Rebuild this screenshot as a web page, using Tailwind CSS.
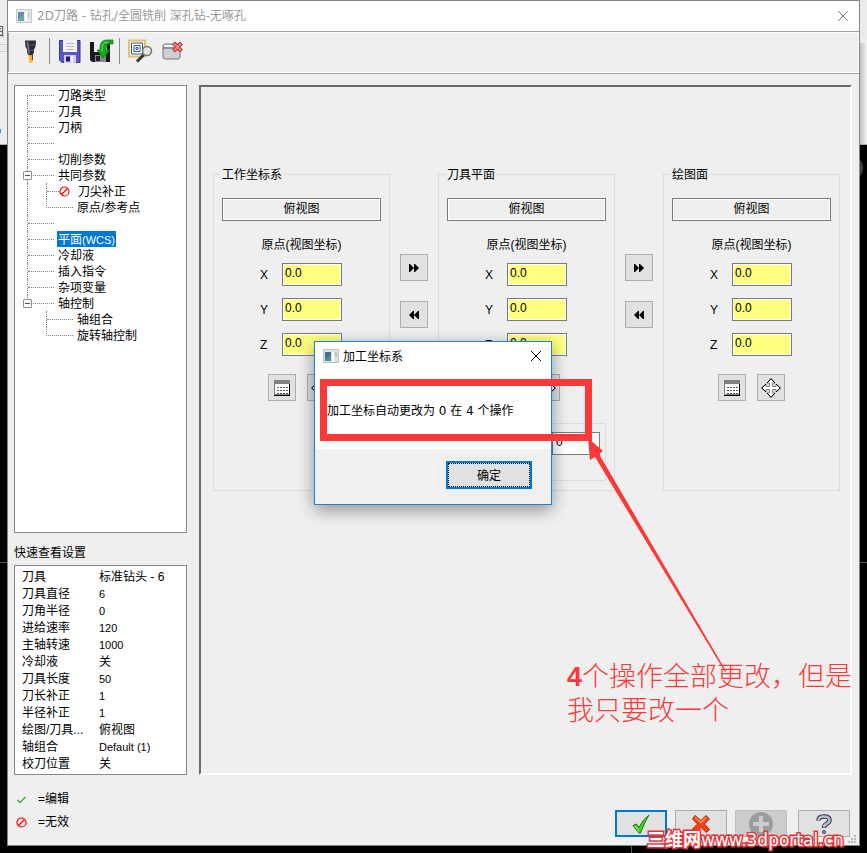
<!DOCTYPE html>
<html lang="zh-CN">
<head>
    <meta charset="UTF-8">
    <meta name="viewport" content="width=device-width, initial-scale=1.0">
    <title>2D刀路</title>
    <script src="https://cdn.jsdelivr.net/npm/@tailwindcss/browser@4"></script>
</head>
<body class="relative flex h-screen flex-col overflow-hidden bg-black px-[7px] pb-[7px] font-['Liberation_Sans','Noto_Sans_CJK_SC',sans-serif] text-[12px] leading-4 text-black">

    <!-- Shared icons -->
    <svg class="hidden">
        <symbol id="app" viewBox="0 0 16 14">
            <path d="M.5.5h15v13H.5z" fill="#dfe3e6" stroke="#b9bec2"/>
            <path d="M2 3h6v9H2z" fill="#4d8f8a"/><path d="M2 3h6v3L2 10z" fill="#43719c"/>
            <path d="M9 3h2v9H9z" fill="#fff"/><path d="M12 3h2v5h-2z" fill="#a9cdb8"/>
        </symbol>
        <symbol id="no" viewBox="0 0 11 11">
            <circle cx="5.5" cy="5.5" r="4.5" fill="none" stroke="#f00" stroke-width="1.2"/><path d="M2.5 8.5l6-6" stroke="#f00" stroke-width="1.2"/>
        </symbol>
        <symbol id="list" viewBox="0 0 16 16">
            <path d="M.5.5h15v14H.5z" fill="#fff" stroke="#808080"/><path d="M0 0h16v4H0z" fill="#808080"/>
            <path d="M0 15.5h16M15.5 4v12" stroke="#000"/>
            <path d="M3 7.5h11M3 10.5h11M3 13.5h11" stroke="#555" stroke-dasharray="2 1"/>
        </symbol>
        <symbol id="move" viewBox="0 0 20 20">
            <path d="M10 .7l4 4.300h-2.500v3.500H15V6l4.300 4-4.300 4v-2.500h-3.500V15H14l-4 4.300L6 15h2.500v-3.500H5V14L.7 10 5 6v2.500h3.500V5H6z" fill="#fff" stroke="#808080"/>
            <path d="M6 5l4-4.300L14 5M15 6l4.300 4-4.300 4M14 15l-4 4.300L6 15M5 14L.7 10 5 6" fill="none" stroke="#000"/>
        </symbol>
        <symbol id="next" viewBox="0 0 10 8"><path d="M0 0h1l4 4-4 4H0zM5 0h1l4 4-4 4H5z"/></symbol>
        <symbol id="prev" viewBox="0 0 10 8"><path d="M5 0H4L0 4l4 4h1zM10 0H9L5 4l4 4h1z"/></symbol>
    </svg>

    <!-- Desktop behind the window -->
    <div class="absolute inset-x-0 top-0 h-[145px] border-b border-[#aaa] bg-[#ececec]">
        <div class="mt-[44px] h-2 border-y border-[#ccc]"></div>
        <div class="absolute top-[24px] left-[-8px] text-[#5b3410]">图</div>
        <div class="absolute top-[129px] left-0 h-1 w-px bg-[#3d93dd]"></div>
        <div class="absolute right-0 bottom-0 h-[101px] w-2 bg-gradient-to-r from-[#bbb] to-[#f2f2f2]"></div>
    </div>
    <div class="absolute inset-x-0 top-[562px] h-px bg-[#555]"></div>
    <div class="absolute top-[156px] right-[4px] size-6 rounded-full bg-[#444]"></div>
    <div class="absolute bottom-0 left-[631px] h-2 w-px bg-[#555]"></div>

    <!-- Toolpath window -->
    <div class="relative flex min-h-0 flex-1 flex-col border border-[#848484] bg-[#efefef]">
        <header class="flex h-[31px] shrink-0 items-center border-b border-[#a0a0a0] bg-white pr-2 pl-2">
            <svg class="h-[14px] w-4 opacity-80"><use href="#app"/></svg>
            <h1 class="ml-[5px] flex-1 font-['DejaVu_Sans','Noto_Sans_CJK_SC',sans-serif] text-[#999]">2D刀路 - 钻孔/全圆铣削 深孔钻-无啄孔</h1>
            <button aria-label="关闭" class="size-4"><svg viewBox="0 0 16 16" class="size-4"><path d="M3 3l10 10M13 3L3 13" stroke="#888" fill="none"/></svg></button>
        </header>

        <div class="flex h-[42px] shrink-0 items-center border-t border-b border-t-white border-b-[#a0a0a0] pb-1 pl-[15px] shadow-[inset_0_-1px_#fff,inset_-1px_0_#fff,inset_1px_0_#a0a0a0]">
            <button aria-label="刀具"><svg viewBox="0 0 16 24" class="h-6 w-4">
                <path d="M2 1.500h11l-.5 6-1.500 3v3l-1.500 2.500H5.500L4 13.500v-3l-1.500-3z" fill="#2a2937"/>
                <path d="M4.500 2.500L6 14.500" stroke="#85839c" stroke-width="1.500"/><path d="M2 6h11M4 11.500h7" stroke="#5b596d"/>
                <path d="M5.500 16h4v7.500h-3z" fill="#f59a13"/><path d="M6 17.500l3 2M6 20.500l3 2" stroke="#ffe14b"/><path d="M9.500 16v5" stroke="#8b3b08"/>
            </svg></button>
            <div class="ml-[10px] h-[26px] w-px bg-[#888]"></div>
            <button aria-label="保存" class="ml-[9px]"><svg viewBox="0 0 22 23" class="h-[23px] w-[22px]">
                <path d="M.5.5H21v22H3l-2.500-2.500z" fill="#5b55c8" stroke="#37318f"/><path d="M4 0h14v12H4z" fill="#f3f3f6"/>
                <path d="M7 3.500h8M7 6.500h8M7 9.500h8" stroke="#bbb"/><path d="M5 15h12v8H5z" fill="#cfd0ea"/><path d="M7 16.500h4v5H7z" fill="#1f1b70"/><path d="M12 16h2v6h-2z" fill="#fff"/>
            </svg></button>
            <button aria-label="载入" class="ml-[9px]"><svg viewBox="0 0 24 24" class="size-6">
                <path d="M0 3h20v20H2l-2-2z" fill="#17191c"/><path d="M4 3h13v10H4z" fill="#eee"/><path d="M5 16h11v7H5z" fill="#888"/><path d="M6 17h4v5H6z" fill="#222"/>
                <path d="M23 1v4h-3q-4 0-4 4v2h4l-7 8-6-8h3V7q1-6 7-6z" fill="#16a51b" stroke="#087a10" stroke-width=".7"/>
                <path d="M12 13V7q1-4 6-4" stroke="#72e36d" fill="none"/>
            </svg></button>
            <div class="ml-[5px] h-[26px] w-px bg-[#888]"></div>
            <button aria-label="预览" class="ml-2"><svg viewBox="0 0 25 24" class="h-6 w-[25px]">
                <path d="M1 1.500h16v16H1z" fill="#fff" stroke="#e9bd72" stroke-width="2"/>
                <path d="M3.500 4h11v11h-11zM6 6.500h6v6H6zM8 8.500h2v2H8z" fill="none" stroke="#315780"/>
                <circle cx="19" cy="12" r="4.500" fill="#e3e5e7" stroke="#777" stroke-width="1.600"/><path d="M15.500 16L9 22.500" stroke="#333" stroke-width="3"/>
            </svg></button>
            <button aria-label="删除" class="ml-[9px]"><svg viewBox="0 0 21 20" class="h-5 w-[21px]">
                <rect x="1" y="3" width="17" height="15" rx="2" fill="#ccd0d3" stroke="#73787c"/><path d="M1 7h17" stroke="#555"/><path d="M2 5h15" stroke="#f4f4f4" stroke-width="2"/>
                <path d="M11.500 2l8 8M19.500 2l-8 8" stroke="#b33131" stroke-width="4"/><path d="M12 2.500l7 7M19 2.500l-7 7" stroke="#ef8580" stroke-width="2"/>
            </svg></button>
        </div>

        <main class="flex min-h-0 flex-1 gap-3 pt-[11px] pr-[7px] pl-[6px]">
            <!-- Tree and quick view -->
            <aside class="flex w-[173px] shrink-0 flex-col">
                <ul id="tree" class="min-h-0 flex-1 border border-[#828790] bg-white pt-px pl-3"></ul>
                <h2 class="flex h-8 items-center pt-2">快速查看设置</h2>
                <div class="border border-[#828790] bg-white py-[2px] pl-[7px]">
                    <table class="w-full table-fixed text-left"><tbody id="quick"></tbody></table>
                </div>
            </aside>

            <!-- Planes -->
            <section class="flex min-w-0 flex-1 items-start border-2 border-t-[#696969] border-r-white border-b-white border-l-[#696969] pt-[80px] pr-[10px] pl-3">
                <fieldset class="plane h-[324px] min-w-0 flex-1 border border-[#dcdcdc]"><legend class="ml-[6px] px-[2px] pt-[2px] leading-3">工作坐标系</legend></fieldset>
                <div class="flex w-12 shrink-0 flex-col items-center gap-5 pt-[87px]">
                    <button aria-label="复制到刀具平面" class="flex h-[27px] w-7 items-center justify-center border border-[#adadad] bg-[#e1e1e1]"><svg class="h-2 w-[10px]"><use href="#next"/></svg></button>
                    <button aria-label="复制到工作坐标系" class="flex h-[27px] w-7 items-center justify-center border border-[#adadad] bg-[#e1e1e1]"><svg class="h-2 w-[10px]"><use href="#prev"/></svg></button>
                </div>
                <fieldset class="plane h-[324px] min-w-0 flex-1 border border-[#dcdcdc]"><legend class="ml-[6px] px-[2px] pt-[2px] leading-3">刀具平面</legend></fieldset>
                <div class="flex w-12 shrink-0 flex-col items-center gap-5 pt-[87px]">
                    <button aria-label="复制到绘图面" class="flex h-[27px] w-7 items-center justify-center border border-[#adadad] bg-[#e1e1e1]"><svg class="h-2 w-[10px]"><use href="#next"/></svg></button>
                    <button aria-label="复制到刀具平面" class="flex h-[27px] w-7 items-center justify-center border border-[#adadad] bg-[#e1e1e1]"><svg class="h-2 w-[10px]"><use href="#prev"/></svg></button>
                </div>
                <fieldset class="plane h-[324px] min-w-0 flex-1 border border-[#dcdcdc]"><legend class="ml-[6px] px-[2px] pt-[2px] leading-3">绘图面</legend></fieldset>
            </section>
        </main>

        <footer class="flex h-[70px] shrink-0 items-start justify-between pr-[9px] pl-2">
            <div class="flex flex-col gap-[7px] pt-4">
                <div class="flex items-center gap-[11px]"><svg viewBox="0 0 11 11" class="size-[11px]"><path d="M1.500 6L4 8.500l5.500-5.500" fill="none" stroke="#3cb043" stroke-width="1.500"/></svg>=编辑</div>
                <div class="flex items-center gap-[11px]"><svg class="size-[11px]"><use href="#no"/></svg>=无效</div>
            </div>
            <div class="flex gap-2 pt-[35px]">
                <button aria-label="确定" class="flex h-[27px] w-[52px] items-center justify-center border-2 border-[#0078d7] bg-[#e1e1e1]"><svg viewBox="0 0 18 20" class="h-5 w-[18px]">
                    <path d="M1 11.500l3.500-1.500L7 13.500Q11 5 17 1q-4 6-8.500 18H7z" fill="#45d321" stroke="#17780f"/><path d="M3 12l4 5" stroke="#a4f383"/>
                </svg></button>
                <button aria-label="取消" class="flex h-[27px] w-[52px] items-center justify-center border border-[#adadad] bg-[#e1e1e1]"><svg viewBox="0 0 20 20" class="size-5">
                    <path d="M4 1.500l6 5 5-5L18.500 5l-5 5 5 5.500-3 3L10 13.500l-5.500 5L1.500 15l5-5-5-5z" fill="#f9430d" stroke="#b62207"/><path d="M4 3.500l6 5 5-5" fill="none" stroke="#ff966a" stroke-width="1.500"/>
                </svg></button>
                <button aria-label="添加" disabled class="flex h-[27px] w-[52px] items-center justify-center border border-[#bfbfbf] bg-[#ccc]"><svg viewBox="0 0 24 24" class="size-6"><circle cx="12" cy="12" r="12" fill="#9c9c9c"/><path d="M12 4v16M4 12h16" stroke="#ccc" stroke-width="4"/></svg></button>
                <button aria-label="帮助" class="ml-[3px] flex h-[27px] w-[52px] items-center justify-center border border-[#adadad] bg-[#e1e1e1]"><svg viewBox="0 0 16 20" class="h-5 w-4">
                    <path d="M2.500 6.500Q2.500 2.500 8 2.500t5.500 3.500q0 2.500-3 4-2.500 1-2.500 4" fill="none" stroke="#33344a" stroke-width="4.500"/><path d="M2.500 6Q3 2.500 8 2.500t5.500 3.500q0 2.500-3 4-2.500 1-2.500 3.500" fill="none" stroke="#b9bbce" stroke-width="2.500"/>
                    <circle cx="8" cy="18" r="1.500" fill="#b9bbce" stroke="#33344a"/>
                </svg></button>
            </div>
            <svg viewBox="0 0 9 9" class="absolute right-[2px] bottom-[1px] size-[9px]"><path d="M6 0h2v2H6zM3 3h2v2H3zM6 3h2v2H6zM0 6h2v2H0zM3 6h2v2H3zM6 6h2v2H6z" fill="#bbb"/></svg>
        </footer>
    </div>

    <!-- Message box -->
    <div role="dialog" aria-labelledby="msgTitle" class="absolute top-[341px] left-[314px] flex h-[164px] w-[238px] flex-col border border-[#1883d7] bg-white shadow-[0_5px_16px_rgba(0,0,0,0.4)]">
        <div class="flex h-7 items-center px-2">
            <svg class="h-[14px] w-4"><use href="#app"/></svg>
            <h2 id="msgTitle" class="ml-1 flex-1 pt-px">加工坐标系</h2>
            <button aria-label="关闭" class="mr-px size-[12px]"><svg viewBox="0 0 12 12" class="size-[12px]"><path d="M1 1l10 10M11 1L1 11" stroke="#000"/></svg></button>
        </div>
        <p class="flex flex-1 items-center pt-[2px] pl-3 font-['DejaVu_Sans','Noto_Sans_CJK_SC',sans-serif]">加工坐标自动更改为 0 在 4 个操作</p>
        <div class="flex h-[55px] justify-end bg-[#f0f0f0] pt-3 pr-[19px]">
            <button class="h-7 w-[86px] border-2 border-[#0078d7] bg-[#e1e1e1] pt-px outline outline-dotted outline-black -outline-offset-3">确定</button>
        </div>
    </div>

    <!-- Red mark-up -->
    <div class="absolute top-[379px] left-[320px] h-[62px] w-[272px] border-7 border-[#fc3838]"></div>
    <svg viewBox="0 0 140 236" class="absolute top-[438px] left-[587px] h-[236px] w-[140px]"><path d="M1 0l15 13-4 3 127 217-1 1L8 19l-5 3z" fill="#fc3838"/></svg>
    <p class="absolute top-[660px] left-[567px] text-[27px] leading-[34px] font-light whitespace-nowrap text-[#fc3838]"><span class="font-bold">4</span>个操作全部更改，但是<br>我只要改一个</p>
    <p class="absolute top-[830px] left-[647px] font-['DejaVu_Sans','Noto_Sans_CJK_SC',sans-serif] text-[17px] leading-5 whitespace-nowrap text-white [-webkit-text-stroke:3px_#e3343a] [paint-order:stroke_fill]"><span class="text-[18px] font-bold">三维网</span>www.3dportal.cn</p>

    <script>
        // level 0 = root, 1 = child; end = last child of its branch
        const nodes = [
            { text: '刀路类型', first: true }, { text: '刀具' }, { text: '刀柄' }, { text: '' },
            { text: '切削参数' }, { text: '共同参数', open: true },
            { text: '刀尖补正', level: 1, trunk: true, disabled: true },
            { text: '原点/参考点', level: 1, trunk: true, end: true },
            { text: '' }, { text: '平面<span class="text-[11px]">(WCS)</span>', selected: true },
            { text: '冷却液' }, { text: '插入指令' }, { text: '杂项变量' },
            { text: '轴控制', open: true, end: true },
            { text: '轴组合', level: 1 }, { text: '旋转轴控制', level: 1, end: true }
        ];

        function branch(node) {
            const width = node.disabled ? 'w-[13px]' : 'w-[27px]';
            if (node.first) return `<span class="h-2 w-[27px] self-end border-t border-l border-dotted border-[#808080]"></span>`;
            if (node.end) return `<span class="h-[9px] ${width} self-start border-b border-l border-dotted border-[#808080]"></span>`;
            return `<span class="h-4 ${width} border-l border-dotted border-[#808080]"><span class="block h-[9px] border-b border-dotted border-[#808080]"></span></span>`;
        }

        document.getElementById('tree').innerHTML = nodes.map(node => `
            <li class="relative flex h-4 items-center">
                ${node.level ? `<span class="${node.trunk ? 'h-4 w-[19px] border-l border-dotted border-[#808080]' : 'h-4 w-[19px]'}"></span>` : ''}
                ${branch(node)}
                ${node.open ? '<button aria-label="折叠" class="absolute top-1 left-[-4px] flex size-[9px] items-center rounded-[1px] border border-[#919191] bg-white px-px"><span class="h-px w-full bg-[#3a5ba0]"></span></button>' : ''}
                ${node.disabled ? '<svg class="mr-1 size-[11px]"><use href="#no"/></svg>' : ''}
                ${node.text ? `<span class="${node.selected ? 'ml-[3px] bg-[#0078d7] px-px pt-[2px] leading-[14px] text-white' : 'ml-[3px] px-px pt-[2px] leading-[14px]'}">${node.text}</span>` : ''}
            </li>`).join('');

        const quick = [
            ['刀具', '标准钻头 - 6'], ['刀具直径', '6'], ['刀角半径', '0'], ['进给速率', '120'],
            ['主轴转速', '1000'], ['冷却液', '关'], ['刀具长度', '50'], ['刀长补正', '1'],
            ['半径补正', '1'], ['绘图/刀具...', '俯视图'], ['轴组合', 'Default (1)'], ['校刀位置', '关']
        ];
        document.getElementById('quick').innerHTML = quick.map(([name, value]) => `
            <tr class="h-[17px]"><th scope="row" class="w-[77px] p-0 font-normal">${name}</th><td class="${/^[\x00-\x7f]+$/.test(value) ? 'p-0 text-[11px]' : 'p-0'}">${value}</td></tr>`).join('');

        document.querySelectorAll('.plane').forEach((plane, i) => {
            const axes = ['X', 'Y', 'Z'].map(axis => `
                <div class="flex items-center">
                    <label for="${axis}${i}" class="w-[22px]">${axis}</label>
                    <input id="${axis}${i}" value="0.0" class="h-[23px] w-[60px] border border-[#7a7a7a] bg-[#ffff80] px-[2px] pb-1 shadow-[inset_0_0_0_1px_#fff]">
                </div>`).join('');
            plane.insertAdjacentHTML('beforeend', `
                <div class="px-2 pt-[17px]">
                    <button class="h-[23px] w-full border border-[#7a7a7a] pb-[2px] shadow-[inset_0_0_0_1px_#fff]">俯视图</button>
                    <p class="mt-4 text-center">原点(视图坐标)</p>
                    <div class="mt-[10px] flex flex-col gap-3 pl-[38px]">${axes}</div>
                    <div class="mt-[18px] flex gap-[11px] pl-[46px]">
                        <button aria-label="列表" class="flex h-[27px] w-7 items-center justify-center border border-[#adadad] bg-[#e1e1e1]"><svg class="size-4"><use href="#list"/></svg></button>
                        <button aria-label="移动" class="flex h-[27px] w-7 items-center justify-center border border-[#adadad] bg-[#e1e1e1]"><svg class="size-5"><use href="#move"/></svg></button>
                    </div>
                    ${i === 1 ? `<div class="mt-[22px] flex h-[58px] items-start justify-end border border-[#dcdcdc] pt-2 pr-[5px]">
                        <input aria-label="偏移" value="0" class="h-[23px] w-12 border border-[#7a7a7a] bg-white px-[3px] pb-1">
                    </div>` : ''}
                </div>`);
        });
    </script>
</body>
</html>
